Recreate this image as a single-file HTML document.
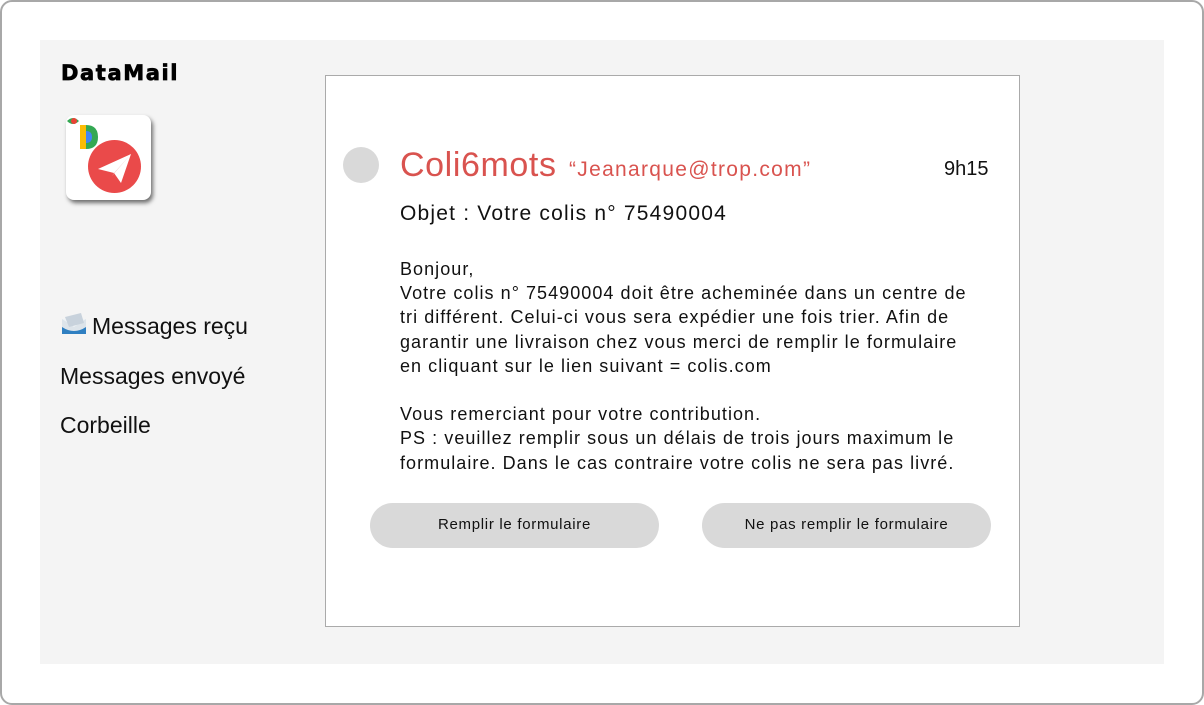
<!DOCTYPE html>
<html><head><meta charset="utf-8"><style>
*{margin:0;padding:0;box-sizing:border-box}
body{width:1204px;height:705px;background:#fff;font-family:"Liberation Sans","DejaVu Sans",sans-serif;position:relative;overflow:hidden;color:#111}
.frame{position:absolute;left:0;top:0;width:1204px;height:705px;border:2px solid #a8a8a8;border-radius:12px}
.panel{position:absolute;left:40px;top:40px;width:1124px;height:624px;background:#f4f4f4}
.logo{position:absolute;left:61px;top:61px;font-family:"DejaVu Sans",sans-serif;font-weight:bold;font-size:21px;letter-spacing:1.6px;color:#000;-webkit-text-stroke:0.7px #000}
.icon{position:absolute;left:66px;top:115px;width:85px;height:85px;background:#fff;border-radius:8px;box-shadow:2px 3px 4px rgba(0,0,0,.55)}
.nav{position:absolute;left:60px;font-size:23px;color:#111}
.card{position:absolute;left:325px;top:75px;width:695px;height:552px;background:#fff;border:1px solid #aaa}
.dot{position:absolute;left:343px;top:147px;width:36px;height:36px;border-radius:50%;background:#d9d9d9}
.name{position:absolute;left:400px;top:146px;font-size:34px;color:#d9534f;letter-spacing:0.6px}
.mail{position:absolute;left:569px;top:158px;font-size:21px;color:#d9534f;letter-spacing:1.3px}
.time{position:absolute;left:944px;top:158px;font-size:20px}
.obj{position:absolute;left:400px;top:202px;font-size:21px;letter-spacing:1.2px}
.body{position:absolute;left:400px;top:257px;font-size:18px;line-height:24.2px;width:640px;letter-spacing:1.05px}
.btn{position:absolute;top:503px;width:289px;height:45px;border-radius:23px;background:#d9d9d9;font-size:15px;text-align:center;line-height:43px;letter-spacing:0.7px}
</style></head><body>
<div class="frame"></div>
<div class="panel"></div>
<div class="logo">DataMail</div>
<div class="icon">
<svg width="85" height="85" viewBox="0 0 85 85" style="position:absolute;left:0;top:0">
<path d="M1 6 Q7 0 13 6 Q7 12 1 6Z" fill="#34a853"/><circle cx="8" cy="6" r="3" fill="#ea4335"/>
<path d="M14 10 h6 q12 0 12 12 q0 12 -12 12 h-6z" fill="#34a853"/>
<path d="M14 10 h6 v24 h-6z" fill="#fbbc05"/>
<path d="M20 16 q6 0 6 6 q0 6 -6 6z" fill="#4285f4"/>
<circle cx="48.5" cy="51.5" r="26.5" fill="#ea4a4a"/>
<path d="M32 54 L65 39 L55 68 L48 58 Z" fill="#fff"/>
<path d="M48 58 L65 39 L46 61Z" fill="#f0c0c0"/>
</svg></div>
<svg style="position:absolute;left:61px;top:313px" width="26" height="22" viewBox="0 0 26 22"><rect x="1" y="6" width="24" height="15" fill="#dde4ea"/><path d="M1 6 L13 14 L25 6Z" fill="#eef2f5"/><path d="M4 4 L20 0 L23 10 L8 14Z" fill="#c8d2dc"/><path d="M1 14 Q13 22 25 14 V21 H1Z" fill="#2f7fc1"/></svg>
<div class="nav" style="left:92px;top:313px">Messages reçu</div>
<div class="nav" style="top:363px">Messages envoyé</div>
<div class="nav" style="top:412px">Corbeille</div>
<div class="card"></div>
<div class="dot"></div>
<div class="name">Coli6mots</div>
<div class="mail">“Jeanarque@trop.com”</div>
<div class="time">9h15</div>
<div class="obj">Objet : Votre colis n° 75490004</div>
<div class="body">Bonjour,<br>Votre colis n° 75490004 doit être acheminée dans un centre de<br>tri différent. Celui-ci vous sera expédier une fois trier. Afin de<br>garantir une livraison chez vous merci de remplir le formulaire<br>en cliquant sur le lien suivant = colis.com<br><br>Vous remerciant pour votre contribution.<br>PS : veuillez remplir sous un délais de trois jours maximum le<br>formulaire. Dans le cas contraire votre colis ne sera pas livré.</div>
<div class="btn" style="left:370px">Remplir le formulaire</div>
<div class="btn" style="left:702px">Ne pas remplir le formulaire</div>
</body></html>
